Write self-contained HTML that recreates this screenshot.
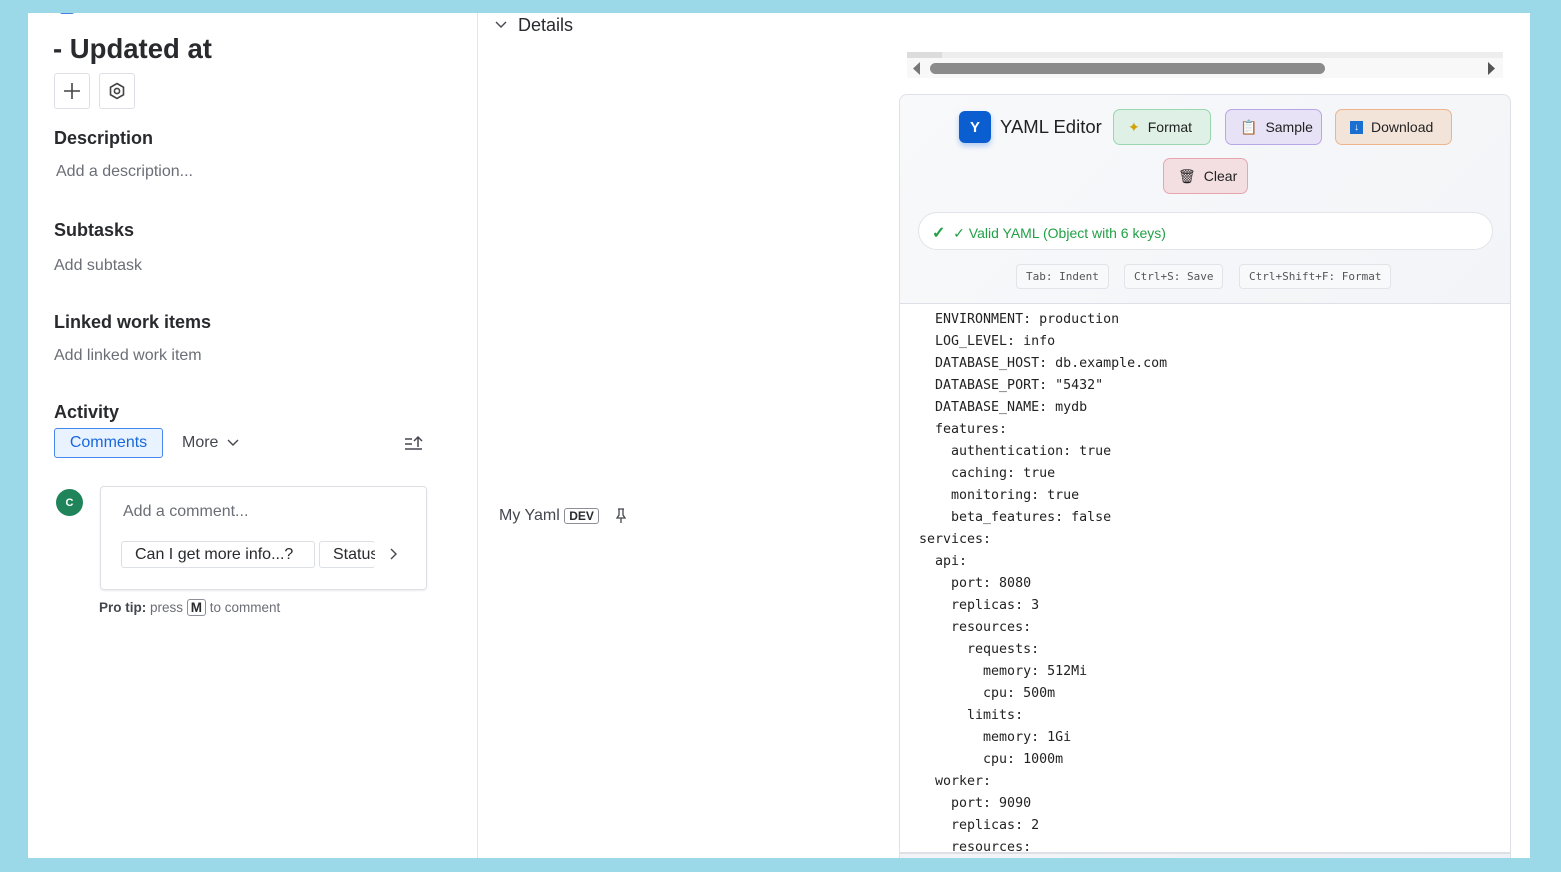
<!DOCTYPE html>
<html><head><style>
*{box-sizing:border-box;margin:0;padding:0}
body{width:1561px;height:872px;background:#9bd8e8;font-family:"Liberation Sans",sans-serif;position:relative;overflow:hidden;color:#292a2e}
.page{position:absolute;left:28px;top:13px;width:1502px;height:845px;background:#fff;overflow:hidden}
.a{position:absolute;white-space:nowrap}
.h{font-weight:bold;font-size:18px;color:#292a2e}
.g{font-size:16px;color:#6b6e76}
.btn{position:absolute;border:1px solid #dcdfe4;border-radius:3px;width:36px;height:36px;display:flex;align-items:center;justify-content:center}
.code{position:absolute;font-family:"DejaVu Sans Mono","Liberation Mono",monospace;font-size:13.3px;color:#222;white-space:pre;line-height:22px}
.eb{position:absolute;height:36px;border-radius:7px;font-size:14px;display:flex;align-items:center;gap:8px;padding:0 14px;color:#222}
.kb{position:absolute;top:251px;height:25px;border:1px solid #e1e4e8;border-radius:4px;background:#f8f9fb;font-family:"DejaVu Sans Mono","Liberation Mono",monospace;font-size:11px;color:#555;display:flex;align-items:center;padding:0 9px}
</style></head><body>
<div class="page">
 <div class="a" style="left:32px;top:-4px;width:14px;height:5px;background:#4a7fe0;border-radius:2px"></div>
 <div class="a" style="left:25px;top:20px;font-size:27.5px;font-weight:bold">- Updated at</div>
 <div class="btn" style="left:26px;top:60px"><svg width="18" height="18"><path d="M9 1v16M1 9h16" stroke="#444" stroke-width="1.6"/></svg></div>
 <div class="btn" style="left:71px;top:60px"><svg width="18" height="18"><path d="M9 1.5l6.5 3.75v7.5L9 16.5l-6.5-3.75v-7.5z" fill="none" stroke="#444" stroke-width="1.6"/><circle cx="9" cy="9" r="2.6" fill="none" stroke="#444" stroke-width="1.6"/></svg></div>
 <div class="a h" style="left:26px;top:115px">Description</div>
 <div class="a g" style="left:28px;top:150px">Add a description...</div>
 <div class="a h" style="left:26px;top:207px">Subtasks</div>
 <div class="a g" style="left:26px;top:244px">Add subtask</div>
 <div class="a h" style="left:26px;top:299px">Linked work items</div>
 <div class="a g" style="left:26px;top:334px">Add linked work item</div>
 <div class="a h" style="left:26px;top:389px">Activity</div>
 <div class="a" style="left:26px;top:415px;width:109px;height:30px;border:1px solid #4688ec;background:#e9f2ff;border-radius:3px;color:#1868db;font-size:16px;display:flex;align-items:center;justify-content:center">Comments</div>
 <div class="a" style="left:154px;top:421px;font-size:16px;color:#44474f">More <svg width="12" height="8" style="margin-left:4px"><path d="M1 1l5 5 5-5" fill="none" stroke="#44474f" stroke-width="1.4"/></svg></div>
 <svg class="a" style="left:376px;top:422px" width="20" height="16"><path d="M1 4h7M1 9h7M1 14h17M14 12V2M10 6l4-4 4 4" fill="none" stroke="#44474f" stroke-width="1.5"/></svg>
 <div class="a" style="left:28px;top:476px;width:27px;height:27px;border-radius:50%;background:#1f845a;color:#fff;font-size:11px;font-weight:bold;display:flex;align-items:center;justify-content:center">C</div>
 <div class="a" style="left:72px;top:473px;width:327px;height:104px;border:1px solid #dcdfe4;border-radius:4px;box-shadow:0 1px 2px rgba(0,0,0,.08)">
  <div class="a" style="left:22px;top:16px;font-size:16px;color:#6b6e76">Add a comment...</div>
  <div class="a" style="left:20px;top:54px;width:194px;height:27px;border:1px solid #dcdfe4;border-radius:3px;font-size:16px;color:#292a2e;padding:4px 0 0 13px">Can I get more info...?</div>
  <div class="a" style="left:218px;top:54px;width:56px;height:27px;border:1px solid #dcdfe4;border-right:none;border-radius:3px;font-size:16px;color:#292a2e;padding:4px 0 0 13px;overflow:hidden">Status</div>
  <svg class="a" style="left:289px;top:61px" width="8" height="12"><path d="M1 1l5 5-5 5" fill="none" stroke="#44474f" stroke-width="1.4"/></svg>
 </div>
 <div class="a" style="left:71px;top:587px;font-size:13.5px;color:#6b6e76"><b style="color:#44474f">Pro tip:</b> press <span style="border:1px solid #8c8f97;border-radius:3px;padding:0 3px;font-weight:bold;color:#292a2e">M</span> to comment</div>

 <div class="a" style="left:449px;top:0;width:1px;height:845px;background:#e4e5e8"></div>
 <svg class="a" style="left:467px;top:8px" width="12" height="8"><path d="M1 1l5 5 5-5" fill="none" stroke="#44474f" stroke-width="1.4"/></svg>
 <div class="a" style="left:490px;top:2px;font-size:18px;color:#292a2e">Details</div>
 <div class="a" style="left:471px;top:494px;font-size:16px;color:#44474f">My Yaml <span style="font-size:12px;font-weight:bold;border:1px solid #8c8f97;border-radius:3px;padding:0 4px;color:#292a2e">DEV</span></div>
 <svg class="a" style="left:587px;top:495px" width="12" height="15"><path d="M3 1h6M4 1v6L2 10h8L8 7V1M6 10v5" fill="none" stroke="#44474f" stroke-width="1.3"/></svg>

 <div class="a" style="left:879px;top:39px;width:596px;height:26px;background:#f8f8f8;border-top:6px solid #ededee"></div>
 <div class="a" style="left:879px;top:39px;width:35px;height:6px;background:#dcdcdc"></div>
 <div class="a" style="left:902px;top:50px;width:395px;height:11px;background:#8b8b8b;border-radius:6px"></div>
 <svg class="a" style="left:885px;top:49px" width="8" height="13"><path d="M7 0v13L0 6.5z" fill="#777"/></svg>
 <svg class="a" style="left:1460px;top:49px" width="8" height="13"><path d="M0 0v13l7-6.5z" fill="#555"/></svg>

 <div class="a" style="left:871px;top:81px;width:612px;height:780px;border:1px solid #dde1e7;border-radius:8px;background:linear-gradient(135deg,#f8f9fb,#eef1f5)"></div>
 <div class="a" style="left:931px;top:98px;width:32px;height:32px;border-radius:6px;background:#0b5ed0;color:#fff;font-weight:bold;font-size:15px;display:flex;align-items:center;justify-content:center;box-shadow:0 3px 6px rgba(11,94,208,.3)">Y</div>
 <div class="a" style="left:972px;top:103px;font-size:18.5px;color:#222">YAML Editor</div>
 <div class="eb" style="left:1085px;top:96px;width:98px;background:#dff0e6;border:1px solid #9ad6ae"><span style="color:#d4a000">✦</span>Format</div>
 <div class="eb" style="left:1197px;top:96px;width:97px;background:#e7e2f5;border:1px solid #b9a6e6"><span>📋</span>Sample</div>
 <div class="eb" style="left:1307px;top:96px;width:117px;background:#f3e4da;border:1px solid #eeb48c"><span style="display:inline-block;width:13px;height:13px;background:#1a6fd0;color:#fff;font-size:10px;line-height:13px;text-align:center">↓</span>Download</div>
 <div class="eb" style="left:1135px;top:145px;width:85px;background:#f3dfe2;border:1px solid #e6a6ae"><span>🗑</span>Clear</div>
 <div class="a" style="left:890px;top:199px;width:575px;height:38px;border:1px solid #e1e4e8;border-radius:19px;background:#fff;font-size:14px;color:#22a046;padding:10px 0 0 13px"><b style="font-size:16px">✓</b> &nbsp;✓ Valid YAML (Object with 6 keys)</div>
 <div class="kb" style="left:988px">Tab: Indent</div>
 <div class="kb" style="left:1096px">Ctrl+S: Save</div>
 <div class="kb" style="left:1211px">Ctrl+Shift+F: Format</div>

 <div class="a" style="left:872px;top:290px;width:610px;height:551px;background:#fff;border-top:1px solid #dde1e7;border-bottom:2px solid #dde1e7;overflow:hidden">
 <div class="code" style="left:19px;top:5px">  ENVIRONMENT: production
  LOG_LEVEL: info
  DATABASE_HOST: db.example.com
  DATABASE_PORT: "5432"
  DATABASE_NAME: mydb
  features:
    authentication: true
    caching: true
    monitoring: true
    beta_features: false
services:
  api:
    port: 8080
    replicas: 3
    resources:
      requests:
        memory: 512Mi
        cpu: 500m
      limits:
        memory: 1Gi
        cpu: 1000m
  worker:
    port: 9090
    replicas: 2
    resources:</div>
 </div>
</div>
</body></html>
